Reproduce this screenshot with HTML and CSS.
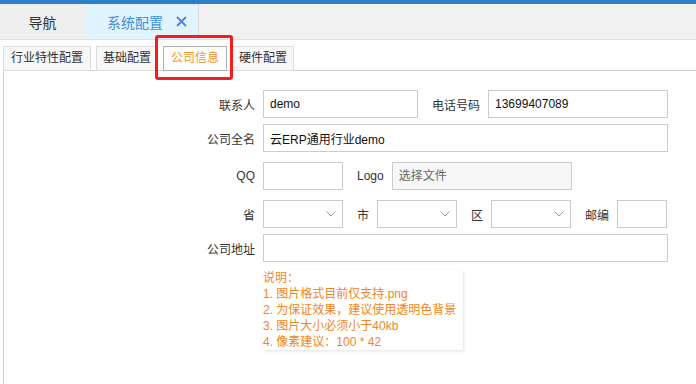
FILE: index.html
```html
<!DOCTYPE html>
<html lang="zh-CN">
<head>
    <meta charset="UTF-8">
    <meta name="viewport" content="width=device-width, initial-scale=1.0">
    <title>系统配置</title>
    <link rel="stylesheet" href="styles.css">
</head>
<body>

<div class="topbar"></div>
<div class="header">
    <div class="htab">导航</div>
    <div class="htab active">系统配置
        <svg class="close" width="11" height="11" viewBox="0 0 11 11"><path d="M1 1L10 10M10 1L1 10" stroke="#4a82e8" stroke-width="1.8" fill="none"/></svg>
    </div>
</div>

<div class="subtabs">
    <div class="stab first">行业特性配置</div>
    <div class="stab">基础配置</div>
    <div class="stab current">公司信息</div>
    <div class="stab">硬件配置</div>
</div>
<div class="mark"></div>

<div class="panel">
    <div class="row">
        <label class="lbl">联系人</label>
        <input class="field w155" type="text" value="demo">
        <label class="lbl-inline">电话号码</label>
        <input class="field w180" type="text" value="13699407089">
    </div>
    <div class="row">
        <label class="lbl">公司全名</label>
        <input class="field w405" type="text" value="云ERP通用行业demo">
    </div>
    <div class="row loose">
        <label class="lbl">QQ</label>
        <input class="field w80" type="text">
        <label class="lbl-inline">Logo</label>
        <div class="field w180 file">选择文件</div>
    </div>
    <div class="row loose">
        <label class="lbl">省</label>
        <div class="field w80 select"><svg class="chev" width="10" height="6" viewBox="0 0 10 6"><path d="M0.5 0.5L5 5L9.5 0.5" stroke="#9a9a9a" fill="none"/></svg></div>
        <label class="lbl-inline">市</label>
        <div class="field w80 select"><svg class="chev" width="10" height="6" viewBox="0 0 10 6"><path d="M0.5 0.5L5 5L9.5 0.5" stroke="#9a9a9a" fill="none"/></svg></div>
        <label class="lbl-inline">区</label>
        <div class="field w80 select"><svg class="chev" width="10" height="6" viewBox="0 0 10 6"><path d="M0.5 0.5L5 5L9.5 0.5" stroke="#9a9a9a" fill="none"/></svg></div>
        <label class="lbl-inline">邮编</label>
        <input class="field w50" type="text">
    </div>
    <div class="row">
        <label class="lbl">公司地址</label>
        <input class="field w405" type="text">
    </div>
    <div class="notes">
        <div>说明：</div>
        <div>1. 图片格式目前仅支持.png</div>
        <div>2. 为保证效果，建议使用透明色背景</div>
        <div>3. 图片大小必须小于40kb</div>
        <div>4. 像素建议：100 * 42</div>
    </div>
</div>

</body>
</html>
```

FILE: styles.css
```css
body {
    margin: 0;
    font-family: "Liberation Sans", "Noto Sans CJK SC", sans-serif;
    font-size: 12px;
    color: #333;
    background: #fff;
    height: 384px;
    overflow: hidden;
}
.topbar {
    height: 4px;
    background: #2b80c9;
}
.header {
    display: flex;
    height: 35px;
    background: #f1f1f1;
    border-bottom: 1px solid #e0e0e0;
}
.htab {
    width: 85px;
    display: flex;
    align-items: center;
    justify-content: center;
    font-size: 14px;
    color: #333;
    background: #eeeeee;
}
.htab.active {
    width: 114px;
    box-sizing: border-box;
    padding-left: 22px;
    justify-content: flex-start;
    background: #e1f3fc;
    color: #3f8ee0;
    border-right: 1px solid #d9d9d9;
}
.close {
    margin-left: 13px;
}
.subtabs {
    display: flex;
    gap: 5px;
    padding: 6px 0 0 3px;
    position: relative;
    z-index: 1;
}
.stab {
    height: 23px;
    line-height: 23px;
    padding: 0 6px;
    border: 1px solid #dcdcdc;
    background: #f7f7f7;
    margin-bottom: -1px;
}
.stab.first {
    padding: 0 7px;
}
.stab.current {
    padding: 0 7px;
    background: #fff;
    border-color: #b0b0b0;
    color: #f39325;
}
.mark {
    position: absolute;
    left: 155px;
    top: 35px;
    width: 78px;
    height: 45px;
    box-sizing: border-box;
    border: 3px solid #f51c1c;
    border-radius: 3px;
    z-index: 2;
}
.panel {
    margin-left: 3px;
    border-left: 1px solid #cfcfcf;
    border-top: 1px solid #cfcfcf;
    padding: 19px 0 0 191px;
    height: 294px;
}
.row {
    display: flex;
    align-items: center;
    margin-bottom: 6px;
}
.row.loose {
    margin-top: 10px;
}
.lbl {
    width: 60px;
    text-align: right;
    margin-right: 8px;
}
.lbl-inline {
    margin: 0 8px 0 14px;
}
.field {
    height: 28px;
    box-sizing: border-box;
    border: 1px solid #cccccc;
    background: #fff;
    font-family: "Liberation Sans", "Noto Sans CJK SC", sans-serif;
    font-size: 12px;
    color: #111;
    padding: 0 6px;
    margin: 0;
    outline: none;
}
.w50 { width: 50px; }
.w80 { width: 80px; }
.w155 { width: 155px; }
.w180 { width: 180px; }
.w405 { width: 405px; }
.file {
    background: #f7f7f7;
    color: #666;
    line-height: 26px;
}
.select {
    position: relative;
}
.chev {
    position: absolute;
    right: 6px;
    top: 10px;
}
.notes {
    margin: 8px 0 0 68px;
    width: 200px;
    color: #f0861c;
    line-height: 16px;
    box-shadow: 1px 1px 3px rgba(0, 0, 0, 0.12);
}
```
